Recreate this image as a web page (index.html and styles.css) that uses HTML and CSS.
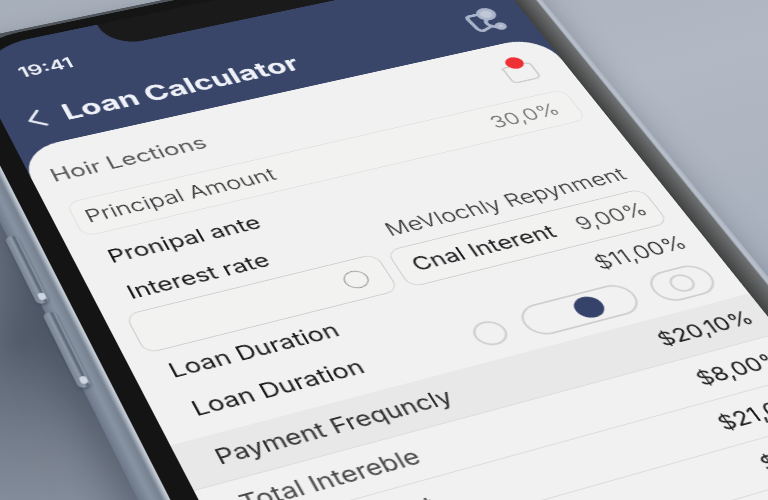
FILE: index.html
```
<!DOCTYPE html>
<html lang="en">
<head>
  <meta charset="UTF-8">
  <meta name="viewport" content="width=device-width, initial-scale=1.0">
  <title>Loan Calculator</title>
  <link rel="stylesheet" href="styles.css">
</head>
<body>
  <div class="scene">
    <div class="phone">
      <span class="side-button volume-up"></span>
      <span class="side-button volume-down"></span>
      <div class="bezel">
        <div class="screen">
          <div class="notch"><span class="camera"></span></div>

          <header class="header">
            <div class="status">19:41</div>
            <div class="title-bar">
              <a class="back" href="#" aria-label="Back">
                <svg width="18" height="28" viewBox="0 0 18 28"><path d="M14 3 3 15l13 10" /></svg>
              </a>
              <h1>Loan Calculator</h1>
              <button class="share" type="button" aria-label="Share">
                <svg width="38" height="44" viewBox="0 0 38 44">
                  <path d="M15 10H8q-4 0-4 4l2 16q1 6 6 5l10-4M22 20q-6 4-1 11l6 4" />
                  <circle class="fill" cx="25" cy="12" r="8" />
                  <circle class="fill" cx="30" cy="34" r="4" />
                </svg>
              </button>
            </div>
          </header>

          <form class="card">
            <div class="section-head">
              <h2>Hoir Lections</h2>
              <button class="inbox" type="button" aria-label="Notifications">
                <svg width="36" height="32" viewBox="0 0 36 32"><path d="M9 5H5Q1 5 3 9v14q0 6 5 6h18q6 0 6-6V9q0-4-4-4h-2" /></svg>
                <span class="dot"></span>
              </button>
            </div>

            <div class="field principal">
              <label for="principal">Principal Amount</label>
              <input id="principal" type="text" value="30,0%">
            </div>

            <div class="columns">
              <div class="column">
                <p>Pronipal ante</p>
                <label for="rate">Interest rate</label>
                <div class="field">
                  <input id="rate" type="text" value="">
                  <input class="ring" type="radio" name="rate-type" aria-label="Use this rate">
                </div>
              </div>
              <div class="column">
                <p class="muted">MeVlochly Repynment</p>
                <div class="field">
                  <label for="interest">Cnal Interent</label>
                  <input id="interest" type="text" value="9,00%">
                </div>
              </div>
            </div>

            <div class="line">
              <span>Loan Duration</span>
              <output>$11,00%</output>
            </div>
            <div class="line options">
              <span>Loan Duration</span>
              <div class="controls">
                <input class="ring large" type="radio" name="duration" aria-label="Months">
                <input class="switch" type="checkbox" checked aria-label="Duration in years">
                <input class="pill" type="checkbox" aria-label="Fixed duration">
              </div>
            </div>

            <table class="summary">
              <tr class="active"><th scope="row">Payment Frequncly</th><td>$20,10%</td></tr>
              <tr><th scope="row">Total Intereble</th><td>$8,00%</td></tr>
              <tr><th scope="row">Total Amount</th><td>$21,00%</td></tr>
              <tr><th scope="row"></th><td>$9,00%</td></tr>
              <tr><th scope="row"></th><td></td></tr>
            </table>
          </form>
        </div>
      </div>
    </div>
  </div>
</body>
</html>
```

FILE: styles.css
```
* {
  box-sizing: border-box;
}
body {
  margin: 0;
  font-family: Inter, "Liberation Sans", sans-serif;
  font-size: 23px;
  font-weight: 400;
  line-height: 28px;
  color: #1b1b1d;
}
h1, h2, p {
  margin: 0;
  font-weight: 400;
}
button, input {
  margin: 0;
  padding: 0;
  border: none;
  background: none;
  font: inherit;
  color: inherit;
}
svg {
  display: block;
  fill: none;
  stroke-linecap: round;
  stroke-linejoin: round;
}

.scene {
  height: 100vh;
  overflow: hidden;
  background:
    radial-gradient(ellipse 240px 280px at 20px 340px, #56606e, rgba(86, 96, 110, 0)),
    linear-gradient(165deg, #a7afba 0%, #b2b9c4 35%, #a9b1be 65%, #8995a4 100%);
}

/* phone lying on the desk, seen from the lower right */
.phone {
  position: relative;
  width: 612px;
  padding: 4px 6px 0 24px;
  border-radius: 84px 84px 0 0;
  background: linear-gradient(to right, #6c7787 0, #8792a2 10px, #768190 18px, #c6ced7 23px, #50555c 40px, #50555c 590px, #6c737c 604px, #bcc4cf 608px, #a9b1bd 100%);
  box-shadow: -14px 20px 40px rgba(50, 58, 74, 0.6);
  transform-origin: 0 0;
  transform:
    matrix3d(1.04234, -0.21029, 0, 0.00012937, 0.34316, 0.62311, 0, -0.0003047, 0, 0, 1, 0, 17, 151, 0, 1)
    translate(-45px, -172px);
}
.side-button {
  position: absolute;
  left: -3px;
  width: 11px;
  border-radius: 6px;
  background: linear-gradient(to right, #77828f, #8f9aa9 50%, #566170 75%, #98a3b0);
  box-shadow: 0 2px 3px rgba(60, 68, 82, 0.6);
}
.side-button::after {
  content: "";
  position: absolute;
  right: 1px;
  bottom: 4px;
  width: 6px;
  height: 9px;
  border-radius: 3px;
  background: #ccd5e1;
}
.volume-up {
  top: 280px;
  height: 90px;
}
.volume-down {
  top: 382px;
  height: 94px;
}
.bezel {
  padding: 13px 21px 0;
  border-radius: 80px 80px 0 0;
  background: linear-gradient(to right, #141414 0, #161616 80%, #3e4040 560px, #6f7172 100%);
}
.screen {
  position: relative;
  border-radius: 64px 64px 0 0;
  background: #394669;
  overflow: hidden;
}
.notch {
  position: absolute;
  top: 0;
  left: 134px;
  right: 130px;
  height: 38px;
  border-radius: 0 0 34px 34px;
  background: #1a1a1b;
}
.camera {
  position: absolute;
  right: 86px;
  top: 6px;
  width: 10px;
  height: 10px;
  border-radius: 50%;
  background: #2f3a4c;
}

.header {
  height: 155px;
  padding: 33px 24px 0 22px;
  color: #eef1f7;
}
.status {
  padding-left: 16px;
  font-size: 22px;
  font-weight: 600;
  line-height: 28px;
}
.title-bar {
  display: flex;
  align-items: center;
  gap: 18px;
  margin-top: 34px;
}
.title-bar h1 {
  flex: 1;
  font-size: 31px;
  font-weight: 700;
  line-height: 40px;
}
.back svg {
  stroke: #e4e8f1;
  stroke-width: 3;
}
.share svg {
  stroke: #aab4ca;
  stroke-width: 4;
}
.share .fill {
  fill: #c0c8d8;
}

.card {
  border-radius: 40px 40px 0 0;
  background: #f1f1f1;
}
.section-head {
  display: flex;
  justify-content: space-between;
  align-items: center;
  padding: 30px 28px 24px 18px;
  color: #5a5a5c;
}
.section-head h2 {
  font-size: 24px;
}
.inbox {
  position: relative;
  height: 28px;
}
.inbox svg {
  stroke: #cfcfcf;
  stroke-width: 2;
}
.dot {
  position: absolute;
  top: -8px;
  left: 9px;
  width: 18px;
  height: 18px;
  border-radius: 50%;
  background: #ee2f33;
}

.field {
  display: flex;
  align-items: center;
  gap: 8px;
  height: 50px;
  padding: 0 10px 0 14px;
  border: 1px solid #cdcdcd;
  border-radius: 12px;
  background: #f2f2f1;
}
.field input[type="text"] {
  flex: 1;
  width: 0;
  text-align: right;
}
.principal {
  margin: 0 20px 0 18px;
  padding: 0 18px 0 10px;
  height: 48px;
  border-color: #e0e0e0;
  font-weight: 300;
  color: #303032;
}
.principal input {
  color: #6b6b6d;
}
#interest {
  font-weight: 300;
  color: #38383a;
}
.columns {
  display: grid;
  grid-template-columns: 235px 1fr;
  align-items: end;
  gap: 10px;
  padding: 18px 20px 0 18px;
}
.column p,
.column > label {
  display: block;
  padding-left: 12px;
  margin-bottom: 20px;
  white-space: nowrap;
}
.column > label,
.column .muted {
  margin-bottom: 10px;
}
.column .muted {
  font-weight: 300;
  color: #303032;
}

.ring {
  appearance: none;
  width: 22px;
  height: 22px;
  margin-right: 8px;
  border: 1px solid #8c8c8c;
  border-radius: 50%;
}
.ring.large {
  width: 29px;
  height: 29px;
  margin: 0;
  border: 2px solid #cfcfcf;
}
.line {
  display: flex;
  justify-content: space-between;
  align-items: center;
  padding: 12px 20px 0 30px;
}
.line output {
  font-weight: 300;
}
.options {
  padding: 14px 20px 12px 32px;
}
.controls {
  display: flex;
  align-items: center;
  gap: 18px;
}
.switch,
.pill {
  appearance: none;
  display: flex;
  align-items: center;
  width: 108px;
  height: 38px;
  border: 2px solid #cfcfcf;
  border-radius: 19px;
}
.switch::before,
.pill::before {
  content: "";
  width: 26px;
  height: 26px;
  border-radius: 50%;
}
.switch::before {
  margin-left: 48px;
  background: #35426a;
}
.pill {
  justify-content: center;
  width: 58px;
}
.pill::before {
  width: 18px;
  height: 18px;
  border: 2px solid #cfcfcf;
}

.summary {
  width: 100%;
  border-collapse: collapse;
}
.summary th,
.summary td {
  height: 51px;
  padding: 0 14px 0 30px;
  border-bottom: 1px solid #dcdcdc;
  text-align: left;
  font-weight: 400;
}
.summary th {
  color: #48484a;
}
.summary td {
  font-size: 22px;
  text-align: right;
}
.summary .active {
  background: #e8e8e8;
}
.summary .active th {
  color: #303032;
}
```
